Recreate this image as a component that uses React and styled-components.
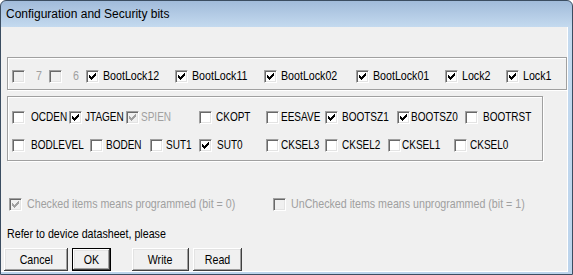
import styled, { createGlobalStyle } from "styled-components"

const Global = createGlobalStyle`
    html, body {
        margin: 0;
        padding: 0;
        background: #ffffff;
    }
    body {
        font-family: "Liberation Sans", Arial, sans-serif;
        font-size: 13px;
    }
`

const Window = styled.div`
    width: 573px;
    height: 275px;
    box-sizing: border-box;
    border: 1px solid #3b4d61;
    border-radius: 6px 6px 0 0;
    background: linear-gradient(#a1bbda, #c4daef 26px, #bcd4ec);
    display: flex;
    flex-direction: column;
    overflow: hidden;
`

const TitleBar = styled.div`
    height: 26px;
    flex: none;
    display: flex;
    align-items: center;
    padding-left: 5px;
    font-size: 12px;
    color: #000;
`

const Body = styled.div`
    flex: 1;
    margin: 0 4px 3px 0;
    background: #f0f0f0;
    border-right: 1px solid #ffffff;
    border-bottom: 1px solid #ffffff;
    padding: 30px 0 0 6px;
    display: flex;
    flex-direction: column;
    align-items: flex-start;
`

const GroupBox = styled.div`
    width: ${p => p.$width}px;
    height: ${p => p.$height}px;
    margin-bottom: ${p => p.$after || 0}px;
    box-sizing: border-box;
    border: 1px solid #a0a0a0;
    box-shadow: inset 1px 1px 0 #ffffff, 1px 1px 0 #ffffff;
    padding: ${p => p.$padTop}px 0 0 4px;
    display: flex;
    flex-direction: column;
    gap: ${p => p.$rowGap || 0}px;
`

const Row = styled.div`
    display: flex;
    align-items: center;
    height: 14px;
`

// the dialog draws its captions in a narrow sans
const Narrow = styled.span`
    display: inline-block;
    white-space: nowrap;
    transform: scaleX(${p => p.$scale || 0.82});
    transform-origin: ${p => (p.$center ? "50% 50%" : "0 50%")};
`

const Item = styled.label`
    display: flex;
    align-items: center;
    flex: none;
    width: ${p => p.$width}px;
    gap: ${p => p.$gap ?? 4}px;
    color: ${p => (p.$disabled ? "#a0a0a0" : "#000")};
    line-height: 14px;
`

const Box = styled.span`
    width: 13px;
    height: 13px;
    box-sizing: border-box;
    flex: none;
    display: flex;
    align-items: center;
    justify-content: center;
    background: ${p => (p.$disabled ? "#f0f0f0" : "#ffffff")};
    border-top: 1px solid #a0a0a0;
    border-left: 1px solid #a0a0a0;
    border-right: 1px solid #ffffff;
    border-bottom: 1px solid #ffffff;
    box-shadow: inset 1px 1px 0 #696969, inset -1px -1px 0 #e3e3e3;
`

const Check = ({ color }) => (
    <svg width="7" height="7" viewBox="0 0 7 7" shapeRendering="crispEdges">
        <path
            fill={color}
            d="M6 0h1v1h-1z M5 1h2v1h-2z M0 2h1v1h-1z M4 2h3v1h-3z M0 3h2v1h-2z M3 3h3v1h-3z M0 4h5v1h-5z M1 5h3v1h-3z M2 6h1v1h-1z"
        />
    </svg>
)

const CheckItem = ({ label, checked, disabled, width, gap, scale }) => (
    <Item $width={width} $gap={gap} $disabled={disabled}>
        <Box $disabled={disabled}>
            {checked && <Check color={disabled ? "#a0a0a0" : "#000"} />}
        </Box>
        <Narrow $scale={scale}>{label}</Narrow>
    </Item>
)

const Legend = styled.div`
    display: flex;
    align-items: center;
    margin: 36px 0 0 2px;
`

const Note = styled.div`
    margin-top: 16px;
    line-height: 14px;
    color: #000;
`

const Buttons = styled.div`
    display: flex;
    gap: 4px;
    margin: 7px 0 0 -3px;
`

const Button = styled.button`
    width: ${p => p.$width}px;
    height: 23px;
    margin-left: ${p => p.$offset || 0}px;
    font-family: "Liberation Sans", Arial, sans-serif;
    font-size: 13px;
    color: #000;
    background: #f0f0f0;
    padding: 0;
    border: ${p => (p.$default ? "1px solid #000" : "none")};
    box-shadow: inset -1px -1px 0 #404040, inset 1px 1px 0 #ffffff,
        inset -2px -2px 0 #a0a0a0, inset 2px 2px 0 #e3e3e3;
`

const row1 = [
    { label: "7", checked: false, disabled: true, width: 37, gap: 11 },
    { label: "6", checked: false, disabled: true, width: 37, gap: 11 },
    { label: "BootLock12", checked: true, width: 89 },
    { label: "BootLock11", checked: true, width: 89 },
    { label: "BootLock02", checked: true, width: 92 },
    { label: "BootLock01", checked: true, width: 89 },
    { label: "Lock2", checked: true, width: 61 },
    { label: "Lock1", checked: true, width: 44 },
]

const row2 = [
    { label: "OCDEN", checked: false, width: 57, gap: 6 },
    { label: "JTAGEN", checked: true, width: 57, gap: 3 },
    { label: "SPIEN", checked: true, disabled: true, width: 73, gap: 2 },
    { label: "CKOPT", checked: false, width: 67, gap: 4 },
    { label: "EESAVE", checked: false, width: 59, gap: 2 },
    { label: "BOOTSZ1", checked: true, width: 72, gap: 4 },
    { label: "BOOTSZ0", checked: true, width: 68, gap: 1 },
    { label: "BOOTRST", checked: false, width: 64, gap: 5 },
]

const row3 = [
    { label: "BODLEVEL", checked: false, width: 78, gap: 6 },
    { label: "BODEN", checked: false, width: 60, gap: 3 },
    { label: "SUT1", checked: false, width: 49, gap: 3 },
    { label: "SUT0", checked: true, width: 67, gap: 5 },
    { label: "CKSEL3", checked: false, width: 59, gap: 2 },
    { label: "CKSEL2", checked: false, width: 63, gap: 4 },
    { label: "CKSEL1", checked: false, width: 66, gap: 1 },
    { label: "CKSEL0", checked: false, width: 60, gap: 3 },
]

export default function App() {
    return (
        <>
            <Global />
            <Window>
                <TitleBar>Configuration and Security bits</TitleBar>
                <Body>
                    <GroupBox $width={560} $height={33} $padTop={11} $after={6}>
                        <Row>
                            {row1.map(i => <CheckItem key={i.label} {...i} />)}
                        </Row>
                    </GroupBox>
                    <GroupBox $width={536} $height={65} $padTop={13} $rowGap={14}>
                        <Row>
                            {row2.map(i => <CheckItem key={i.label} scale={0.77} {...i} />)}
                        </Row>
                        <Row>
                            {row3.map(i => <CheckItem key={i.label} scale={0.77} {...i} />)}
                        </Row>
                    </GroupBox>
                    <Legend>
                        <CheckItem label="Checked items means programmed (bit = 0)" checked disabled width={264} gap={5} />
                        <CheckItem label="UnChecked items means unprogrammed (bit = 1)" disabled width={250} gap={5} />
                    </Legend>
                    <Note>
                        <Narrow>Refer to device datasheet, please</Narrow>
                    </Note>
                    <Buttons>
                        <Button $width={64}><Narrow $center>Cancel</Narrow></Button>
                        <Button $width={39} $default><Narrow $center>OK</Narrow></Button>
                        <Button $width={57} $offset={17}><Narrow $center>Write</Narrow></Button>
                        <Button $width={49}><Narrow $center>Read</Narrow></Button>
                    </Buttons>
                </Body>
            </Window>
        </>
    )
}
